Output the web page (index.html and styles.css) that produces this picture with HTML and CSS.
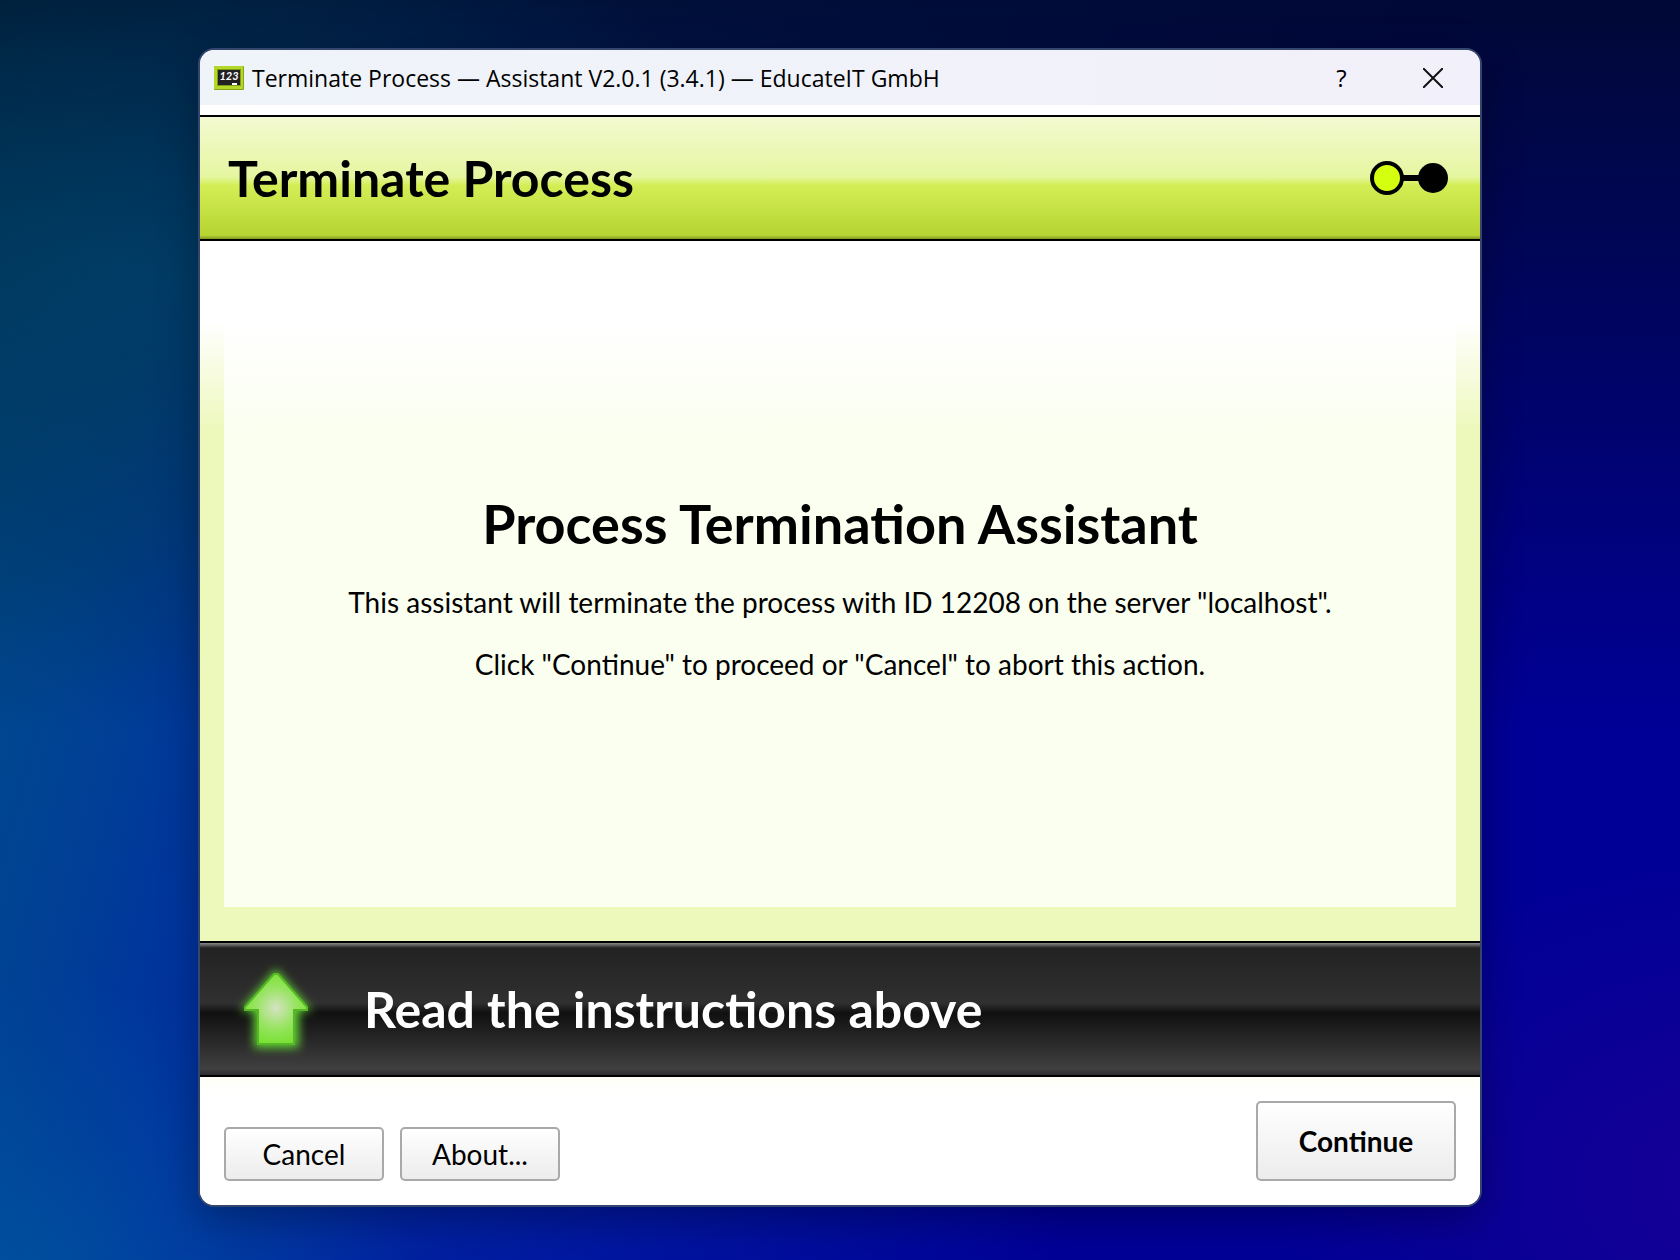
FILE: index.html
```html
<!DOCTYPE html>
<html lang="en">
<head>
  <meta charset="UTF-8">
  <meta name="viewport" content="width=device-width, initial-scale=1.0">
  <title>Terminate Process</title>
  <link rel="stylesheet" href="styles.css">
</head>
<body>
  <div class="window">
    <div class="title-bar">
      <svg class="app-icon" width="30" height="24" viewBox="0 0 30 24" aria-hidden="true">
        <rect x="0" y="0" width="30" height="24" rx="1" fill="#86a51a"/>
        <rect x="0" y="0" width="29" height="23" rx="1" fill="#b4d828"/>
        <rect x="3" y="3" width="24" height="17" fill="#7d9c14"/>
        <rect x="4" y="4" width="22" height="15" fill="#222"/>
        <text class="app-icon-text" x="15" y="14" text-anchor="middle">123</text>
        <rect x="18" y="17" width="5" height="2" fill="#fff"/>
      </svg>
      <span class="title-text">Terminate Process — Assistant V2.0.1 (3.4.1) — EducateIT GmbH</span>
      <button type="button" class="title-btn" aria-label="Help">?</button>
      <button type="button" class="title-btn" aria-label="Close">
        <svg width="20" height="20" viewBox="0 0 20 20"><path d="M0 0l20 20M20 0L0 20" stroke="#111" stroke-width="2"/></svg>
      </button>
    </div>

    <header class="header">
      <h1>Terminate Process</h1>
      <svg class="steps" width="78" height="34" viewBox="0 0 78 34" aria-hidden="true">
        <path d="M32 17h20" stroke="#000" stroke-width="6"/>
        <circle cx="17" cy="17" r="15" fill="#d4ff0f" stroke="#000" stroke-width="4"/>
        <circle cx="63" cy="17" r="15" fill="#000"/>
      </svg>
    </header>

    <main class="content">
      <div class="panel">
        <h2>Process Termination Assistant</h2>
        <p>This assistant will terminate the process with ID 12208 on the server "localhost".</p>
        <p>Click "Continue" to proceed or "Cancel" to abort this action.</p>
      </div>
    </main>

    <div class="hint">
      <svg class="arrow" width="104" height="104" viewBox="0 0 104 104" aria-hidden="true">
        <defs>
          <radialGradient id="arrow-fill" gradientUnits="userSpaceOnUse" cx="52" cy="51" r="42">
            <stop offset="0" stop-color="#d5e2c2"/>
            <stop offset="0.5" stop-color="#96e45e"/>
            <stop offset="1" stop-color="#6fe026"/>
          </radialGradient>
          <filter id="glow" x="-50%" y="-50%" width="200%" height="200%">
            <feGaussianBlur stdDeviation="5"/>
          </filter>
        </defs>
        <path d="M52 12L88 54H75V91H30V54H16Z" fill="#62d036" filter="url(#glow)"/>
        <path d="M50 17H54L83 50V53H70V87H34V53H21V50Z" fill="url(#arrow-fill)" stroke="#55b824" stroke-width="2"/>
      </svg>
      <strong>Read the instructions above</strong>
    </div>

    <footer class="footer">
      <button type="button" class="btn">Cancel</button>
      <button type="button" class="btn">About...</button>
      <button type="button" class="btn btn-primary">Continue</button>
    </footer>
  </div>
</body>
</html>
```
FILE: styles.css
```css
:root {
  --line: #000;
  --lime: #edf8bb;
  --panel: #fbfff0;
  --btn-border: #a9a9a9;
}

* {
  margin: 0;
  padding: 0;
  box-sizing: border-box;
}

body {
  display: flex;
  justify-content: center;
  min-height: 100vh;
  padding: 48px 24px 53px;
  font-family: Lato, "Open Sans", sans-serif;
  color: #000;
  background:
    radial-gradient(ellipse at 0% 104%, rgba(0, 90, 160, 0.7), transparent 18%),
    radial-gradient(ellipse at 104% 94%, rgba(28, 0, 150, 0.8), transparent 20%),
    radial-gradient(ellipse at 8% 22%, rgba(0, 74, 110, 0.6), transparent 30%),
    linear-gradient(to bottom, rgba(0, 10, 30, 0.8), rgba(0, 8, 24, 0) 58%),
    linear-gradient(105deg, #004f86 0%, #004492 12%, #0030a0 24%, #0018a0 45%, #000096 70%, #000096 100%);
}

.window {
  display: flex;
  flex-direction: column;
  width: 100%;
  max-width: 1284px;
  border: 2px solid #34456e;
  border-radius: 16px;
  background: #fff;
  background-clip: padding-box;
  overflow: hidden;
  box-shadow: 0 12px 40px rgba(0, 0, 0, 0.3);
}

.title-bar {
  display: flex;
  align-items: center;
  height: 55px;
  padding: 0 2px 0 14px;
  margin-bottom: 10px;
  background: linear-gradient(to right, #eff4f9, #f2f0fa);
}

.app-icon {
  margin-right: 8px;
}

.app-icon-text {
  fill: #fff;
  font: italic bold 11px Lato, sans-serif;
}

.title-text {
  flex: 1;
  font: 23px/32px "Open Sans", sans-serif;
}

.title-btn {
  display: flex;
  align-items: center;
  justify-content: center;
  width: 91px;
  height: 55px;
  border: 0;
  background: none;
  color: #000;
  font: 24px/32px "Open Sans", sans-serif;
}

.header {
  display: flex;
  align-items: center;
  justify-content: space-between;
  height: 126px;
  padding: 0 32px 0 28px;
  border-top: 2px solid var(--line);
  border-bottom: 2px solid var(--line);
  background: linear-gradient(to bottom, #f3fad2, #e5f6a0 49%, #d3ee55 56%, #b6d432 97%, #7f9622);
}

.header h1 {
  font-size: 50px;
  line-height: 64px;
}

.content {
  flex: 1;
  display: flex;
  padding: 24px 24px 34px;
  background: linear-gradient(to bottom, #fff 80px, var(--lime) 190px);
}

.panel {
  flex: 1;
  display: flex;
  flex-direction: column;
  justify-content: center;
  text-align: center;
  background: linear-gradient(to bottom, #fff 56px, var(--panel) 166px);
}

.panel h2 {
  font-size: 54px;
  line-height: 64px;
  margin-bottom: 30px;
}

.panel p {
  font-size: 28px;
  line-height: 32px;
}

.panel p + p {
  margin-top: 30px;
}

.hint {
  display: flex;
  align-items: center;
  gap: 36px;
  height: 136px;
  padding-left: 24px;
  border-top: 2px solid var(--line);
  border-bottom: 2px solid var(--line);
  background: linear-gradient(to bottom, #8a8a8a, #222 5px, #303030 60px, #101010 70px, #404040 126px, #2c2c2c);
  color: #fff;
}

.hint strong {
  font-size: 50px;
  line-height: 64px;
}

.footer {
  display: flex;
  align-items: flex-end;
  gap: 16px;
  padding: 24px;
  background: linear-gradient(to bottom, #fdfff6, #fff 20px);
}

.btn {
  width: 160px;
  height: 54px;
  border: 2px solid var(--btn-border);
  border-radius: 5px;
  background: linear-gradient(to bottom, #fff, #ececec);
  font: 28px/32px Lato, "Open Sans", sans-serif;
  color: #000;
}

.btn-primary {
  width: 200px;
  height: 80px;
  margin-left: auto;
  font-weight: bold;
}
```
